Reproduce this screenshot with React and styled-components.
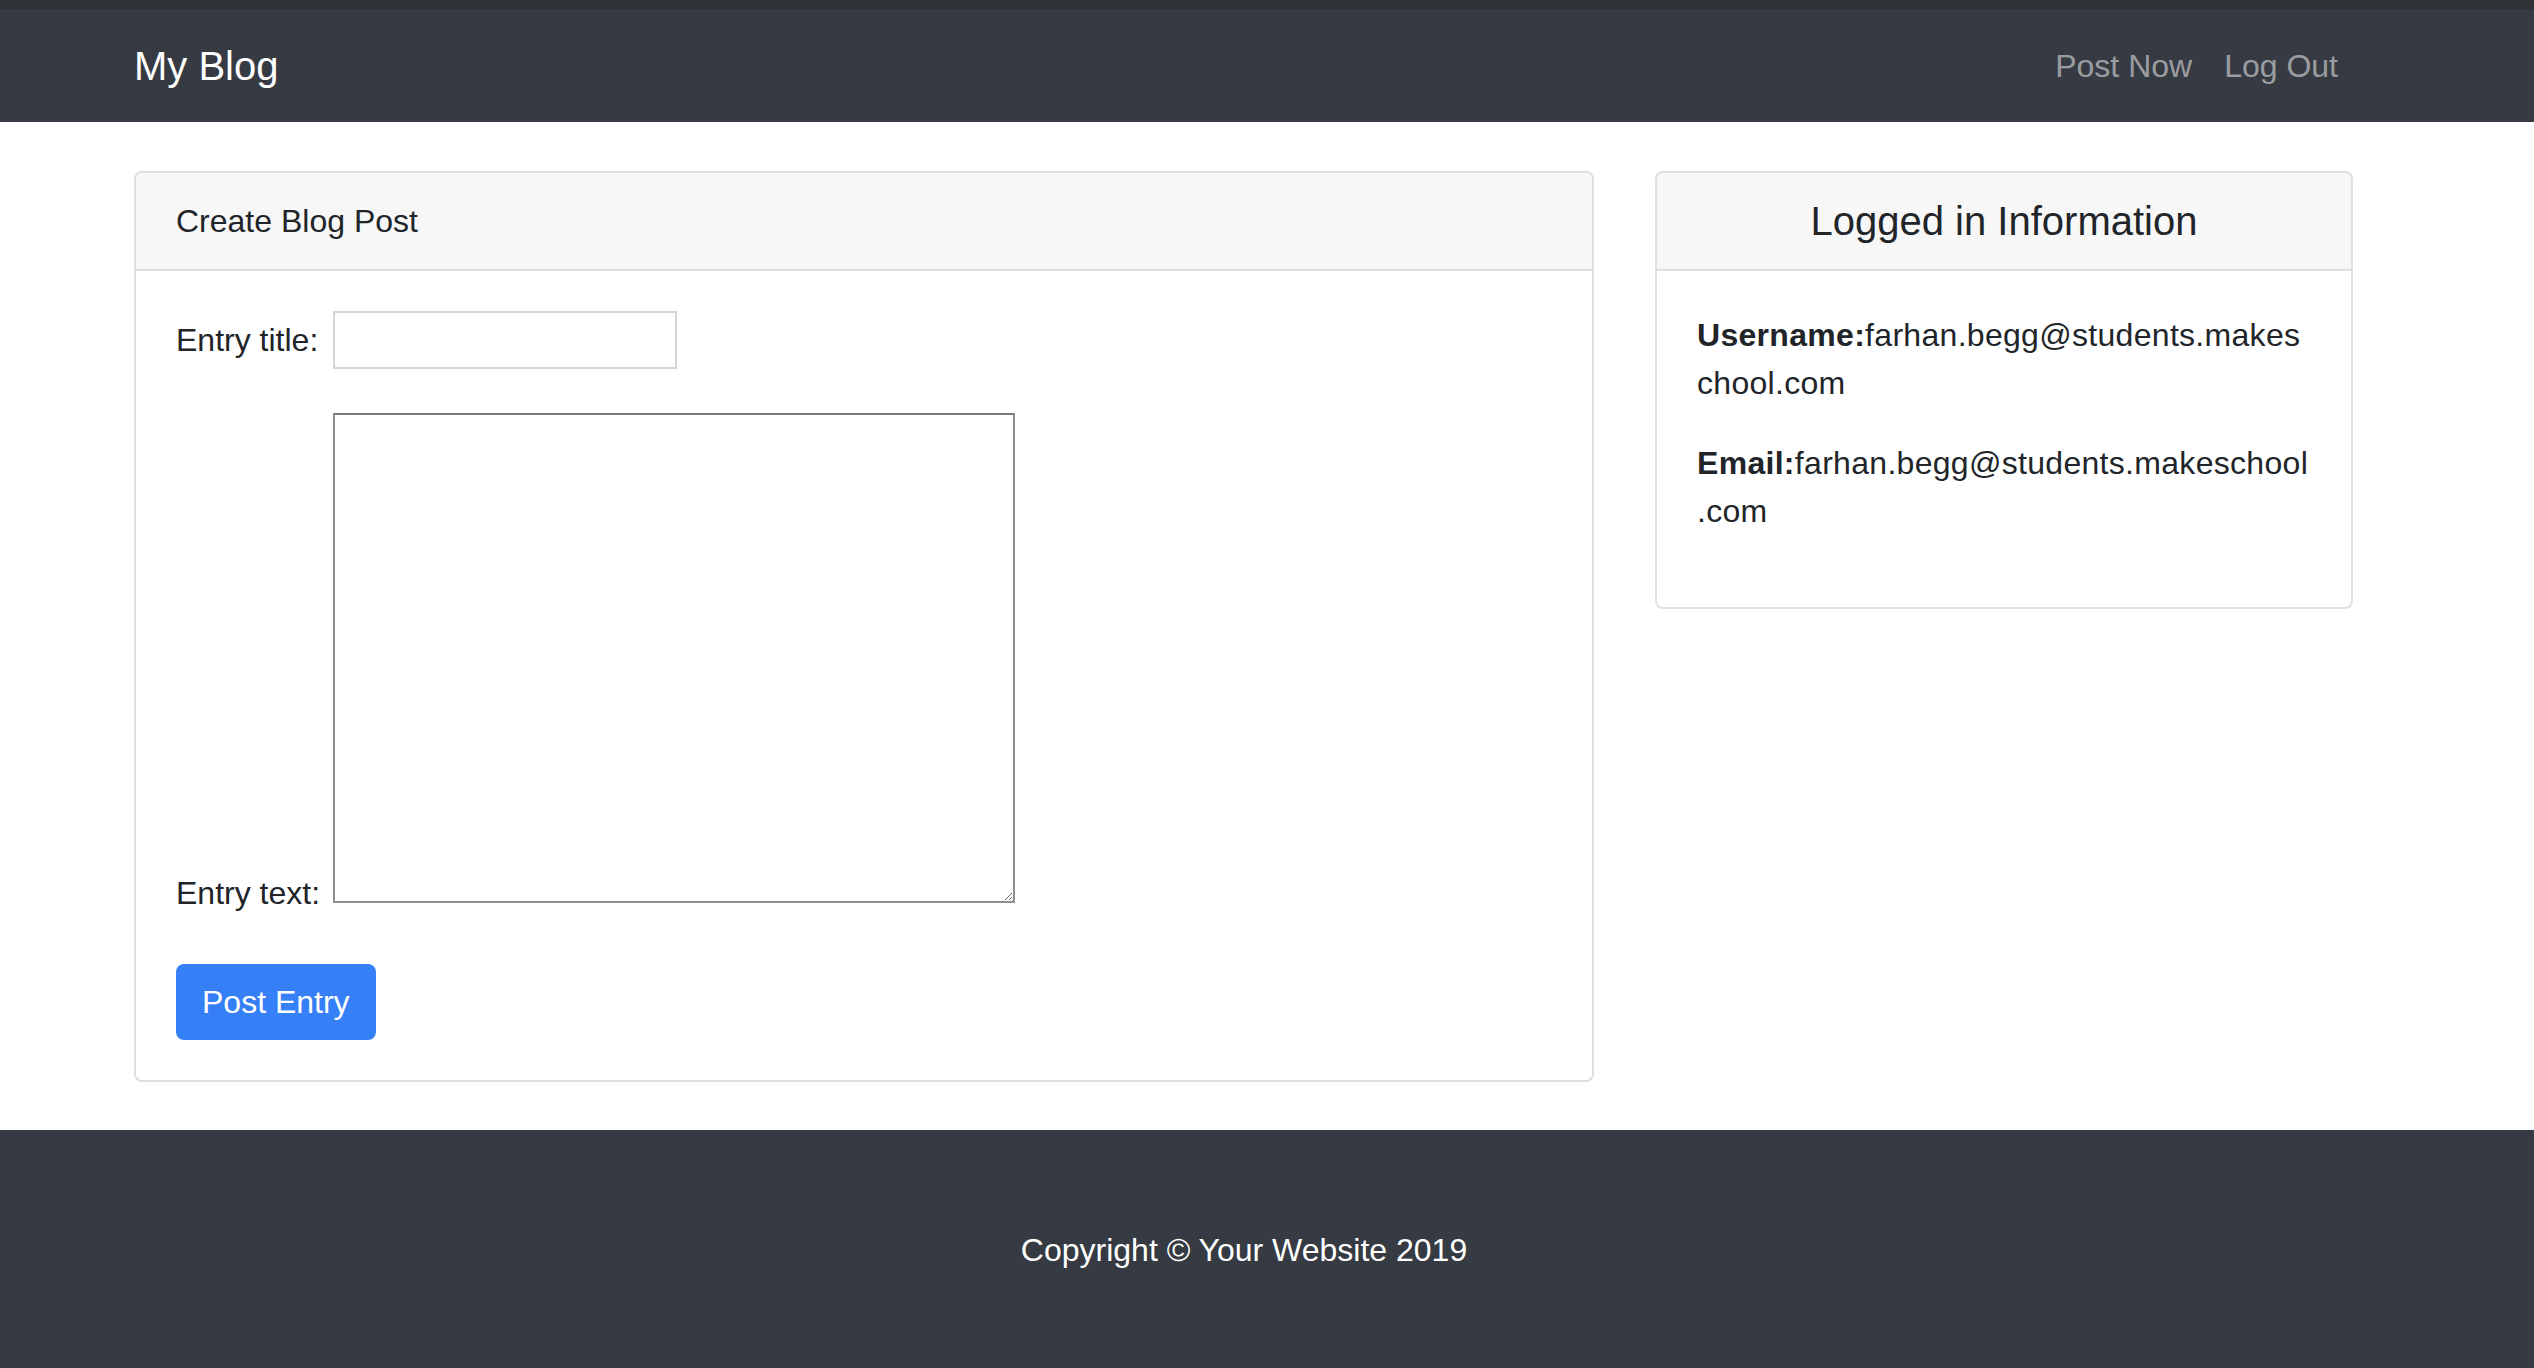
import React from 'react';
import styled, { createGlobalStyle } from 'styled-components';

const GlobalStyle = createGlobalStyle`
	body {
		margin: 0;
		background: #fff;
		font-family: "Liberation Sans", Arial, sans-serif;
		font-size: 32px;
		line-height: 1.5;
		color: #212529;
	}
	* {
		box-sizing: border-box;
	}
`;

const Container = styled.div`
	width: 2280px;
	padding: 0 30px;
	margin-left: 104px;
`;

const Navbar = styled.nav`
	background: #363a42;
	border-top: 9px solid #2e3136;
	padding: 17px 0 16px;
`;

const NavInner = styled(Container)`
	display: flex;
	justify-content: space-between;
	align-items: center;
`;

const Brand = styled.a`
	font-size: 40px;
	line-height: 60px;
	padding: 10px 0;
	color: #fff;
	text-decoration: none;
`;

const NavLinks = styled.div`
	display: flex;
`;

const NavLink = styled.a`
	padding: 0 16px;
	line-height: 48px;
	color: rgba(255, 255, 255, 0.5);
	text-decoration: none;
`;

const Main = styled(Container)`
	padding-top: 49px;
	padding-bottom: 48px;
`;

const Row = styled.div`
	display: grid;
	grid-template-columns: 1460px 698px;
	column-gap: 61px;
	align-items: start;
`;

const Card = styled.div`
	background: #fff;
	border: 2px solid #dfdfdf;
	border-radius: 8px;
	overflow: hidden;
`;

const CardHeader = styled.div`
	padding: 24px 40px;
	background: #f7f7f7;
	border-bottom: 2px solid #dfdfdf;
	text-align: ${(p) => (p.center ? 'center' : 'left')};
`;

const HeaderTitle = styled.h5`
	margin: 0;
	font-size: 40px;
	line-height: 48px;
	font-weight: 500;
`;

const CardBody = styled.div`
	padding: 40px;
`;

const FieldRow = styled.div`
	display: flex;
	align-items: ${(p) => (p.bottom ? 'flex-end' : 'center')};
	margin-bottom: ${(p) => p.space || 0}px;
`;

const Label = styled.label`
	width: 157px;
	flex-shrink: 0;
	line-height: ${(p) => (p.tight ? '20px' : '48px')};
	white-space: nowrap;
`;

const TextInput = styled.input`
	width: 344px;
	height: 58px;
	border: 2px solid #d6d6d6;
	background: #fff;
	font: inherit;
	padding: 0 6px;
`;

const TextArea = styled.textarea`
	width: 682px;
	height: 490px;
	border: 2px solid #8f8f8f;
	border-top-color: #7a7a7a;
	background: #fff;
	font: inherit;
	margin: 0;
	display: block;
`;

const Button = styled.button`
	background: #3580f7;
	border: 2px solid #3580f7;
	border-radius: 8px;
	color: #fff;
	font: inherit;
	line-height: 48px;
	padding: 12px 24px;
	cursor: pointer;
`;

const InfoLine = styled.p`
	margin: 0 0 32px;
	line-height: 48px;
	overflow-wrap: anywhere;
	letter-spacing: 0.3px;

	strong {
		font-weight: 700;
	}
`;

const Footer = styled.footer`
	background: #363a42;
	padding: 96px 0;
`;

const FooterText = styled.p`
	margin: 0;
	text-align: center;
	color: #fff;
	line-height: 48px;
`;

export default function App() {
	return (
		<>
			<GlobalStyle />
			<Navbar>
				<NavInner>
					<Brand href="#">My Blog</Brand>
					<NavLinks>
						<NavLink href="#">Post Now</NavLink>
						<NavLink href="#">Log Out</NavLink>
					</NavLinks>
				</NavInner>
			</Navbar>

			<Main>
				<Row>
					<Card>
						<CardHeader>Create Blog Post</CardHeader>
						<CardBody>
							<FieldRow space={44}>
								<Label htmlFor="title">Entry title:</Label>
								<TextInput id="title" type="text" />
							</FieldRow>
							<FieldRow bottom space={61}>
								<Label tight htmlFor="text">Entry text:</Label>
								<TextArea id="text" />
							</FieldRow>
							<Button type="submit">Post Entry</Button>
						</CardBody>
					</Card>

					<Card>
						<CardHeader center>
							<HeaderTitle>Logged in Information</HeaderTitle>
						</CardHeader>
						<CardBody>
							<InfoLine>
								<strong>Username:</strong>farhan.begg@students.makeschool.com
							</InfoLine>
							<InfoLine>
								<strong>Email:</strong>farhan.begg@students.makeschool.com
							</InfoLine>
						</CardBody>
					</Card>
				</Row>
			</Main>

			<Footer>
				<Container>
					<FooterText>Copyright © Your Website 2019</FooterText>
				</Container>
			</Footer>
		</>
	);
}
